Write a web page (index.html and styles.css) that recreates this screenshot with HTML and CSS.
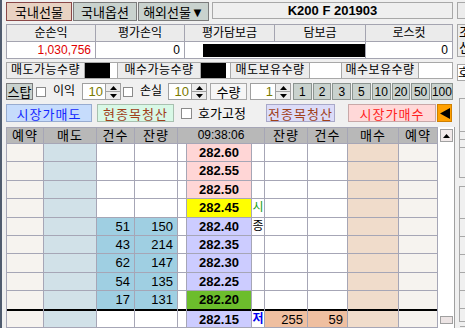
FILE: index.html
```html
<!DOCTYPE html>
<html lang="ko">
<head>
    <meta charset="UTF-8">
    <meta name="viewport" content="width=device-width, initial-scale=1.0">
    <title>선물 주문</title>
    <link rel="stylesheet" href="styles.css">
</head>
<body>
<div class="window">
    <div class="main">
        <div class="tabs">
            <div class="tab active">국내선물</div>
            <div class="tab option">국내옵션</div>
            <div class="tab overseas">해외선물▼</div>
            <div class="title">K200 F 201903</div>
        </div>

        <div class="summary">
            <div class="head">순손익</div>
            <div class="head">평가손익</div>
            <div class="head">평가담보금</div>
            <div class="head">담보금</div>
            <div class="head">로스컷</div>
            <div class="val profit">1,030,756</div>
            <div class="val">0</div>
            <div class="val hidden"><span class="mask"></span></div>
            <div class="val">0</div>
        </div>

        <div class="qty">
            <div class="qty-label">매도가능수량</div>
            <div class="qty-val"><span class="mask"></span></div>
            <div class="qty-label">매수가능수량</div>
            <div class="qty-val"><span class="mask"></span></div>
            <div class="qty-label">매도보유수량</div>
            <div class="qty-val"></div>
            <div class="qty-label">매수보유수량</div>
            <div class="qty-val"></div>
        </div>

        <div class="stop-row">
            <div class="stop-btn">스탑</div>
            <span class="check first"></span>
            <span class="txt profit-txt">이익</span>
            <div class="spin">
                <span class="spin-num">10</span>
                <span class="spin-arrows">
                    <i><svg width="7" height="4" viewBox="0 0 7 4"><path d="M3.5 0L7 4H0z"/></svg></i>
                    <i><svg width="7" height="4" viewBox="0 0 7 4"><path d="M0 0H7L3.5 4z"/></svg></i>
                </span>
            </div>
            <span class="check"></span>
            <span class="txt loss-txt">손실</span>
            <div class="spin">
                <span class="spin-num">10</span>
                <span class="spin-arrows">
                    <i><svg width="7" height="4" viewBox="0 0 7 4"><path d="M3.5 0L7 4H0z"/></svg></i>
                    <i><svg width="7" height="4" viewBox="0 0 7 4"><path d="M0 0H7L3.5 4z"/></svg></i>
                </span>
            </div>
            <div class="qty-box">수량</div>
            <div class="spin wide">
                <span class="spin-num">1</span>
                <span class="spin-arrows">
                    <i><svg width="7" height="4" viewBox="0 0 7 4"><path d="M3.5 0L7 4H0z"/></svg></i>
                    <i><svg width="7" height="4" viewBox="0 0 7 4"><path d="M0 0H7L3.5 4z"/></svg></i>
                </span>
            </div>
            <div class="presets">
                <div class="preset">1</div>
                <div class="preset">2</div>
                <div class="preset">3</div>
                <div class="preset">5</div>
                <div class="preset">10</div>
                <div class="preset">20</div>
                <div class="preset">50</div>
                <div class="preset">100</div>
            </div>
        </div>

        <div class="order-row">
            <div class="obtn sell">시장가매도</div>
            <div class="obtn clear-one">현종목청산</div>
            <span class="check fix"></span>
            <span class="txt fix-txt">호가고정</span>
            <div class="obtn clear-all">전종목청산</div>
            <div class="obtn buy">시장가매수</div>
            <div class="obtn collapse">
                <svg width="10" height="11" viewBox="0 0 10 11"><path d="M0 5.5L10 0V11z"/></svg>
            </div>
        </div>

        <div class="book-area">
            <div class="book">
                <div class="th">예약</div>
                <div class="th">매도</div>
                <div class="th">건수</div>
                <div class="th">잔량</div>
                <div class="th time">09:38:06</div>
                <div class="th">잔량</div>
                <div class="th">건수</div>
                <div class="th">매수</div>
                <div class="th">예약</div>

                <div class="res"></div><div class="ask"></div><div class="num"></div><div class="num"></div><div class="gap"></div>
                <div class="price up">282.60</div><div class="mark"></div>
                <div class="num"></div><div class="num"></div><div class="bid"></div><div class="res"></div>

                <div class="res"></div><div class="ask"></div><div class="num"></div><div class="num"></div><div class="gap"></div>
                <div class="price up">282.55</div><div class="mark"></div>
                <div class="num"></div><div class="num"></div><div class="bid"></div><div class="res"></div>

                <div class="res"></div><div class="ask"></div><div class="num"></div><div class="num"></div><div class="gap"></div>
                <div class="price up">282.50</div><div class="mark"></div>
                <div class="num"></div><div class="num"></div><div class="bid"></div><div class="res"></div>

                <div class="res"></div><div class="ask"></div><div class="num"></div><div class="num"></div><div class="gap"></div>
                <div class="price open">282.45</div><div class="mark green">시</div>
                <div class="num"></div><div class="num"></div><div class="bid"></div><div class="res"></div>

                <div class="res"></div><div class="ask"></div><div class="num sold">51</div><div class="num sold">150</div><div class="gap"></div>
                <div class="price down">282.40</div><div class="mark">종</div>
                <div class="num"></div><div class="num"></div><div class="bid"></div><div class="res"></div>

                <div class="res"></div><div class="ask"></div><div class="num sold">43</div><div class="num sold">214</div><div class="gap"></div>
                <div class="price down">282.35</div><div class="mark"></div>
                <div class="num"></div><div class="num"></div><div class="bid"></div><div class="res"></div>

                <div class="res"></div><div class="ask"></div><div class="num sold">62</div><div class="num sold">147</div><div class="gap"></div>
                <div class="price down">282.30</div><div class="mark"></div>
                <div class="num"></div><div class="num"></div><div class="bid"></div><div class="res"></div>

                <div class="res"></div><div class="ask"></div><div class="num sold">54</div><div class="num sold">135</div><div class="gap"></div>
                <div class="price down">282.25</div><div class="mark"></div>
                <div class="num"></div><div class="num"></div><div class="bid"></div><div class="res"></div>

                <div class="res"></div><div class="ask"></div><div class="num sold">17</div><div class="num sold">131</div><div class="gap"></div>
                <div class="price low">282.20</div><div class="mark"></div>
                <div class="num"></div><div class="num"></div><div class="bid"></div><div class="res"></div>

                <div class="res last"></div><div class="ask last"></div><div class="num last"></div><div class="num last"></div><div class="gap last"></div>
                <div class="price down last">282.15</div><div class="mark blue last">저</div>
                <div class="num bought last">255</div><div class="num bought last">59</div><div class="bid last"></div><div class="res last"></div>
            </div>
            <div class="scroll">
                <div class="scroll-up">
                    <svg width="7" height="4" viewBox="0 0 7 4"><path d="M3.5 0L7 4H0z"/></svg>
                </div>
                <div class="scroll-end"></div>
            </div>
        </div>
    </div>

    <div class="side">
        <div class="side-box top"></div>
        <div class="side-box stack">조<br>신</div>
        <div class="side-box field">호</div>
        <div class="side-box list short">
            <div class="line"></div><div class="line"></div><div class="line"></div>
        </div>
        <div class="side-box list long">
            <div class="line"></div><div class="line"></div><div class="line"></div>
            <div class="line"></div><div class="line"></div><div class="line"></div>
            <div class="line"></div>
        </div>
    </div>
</div>
</body>
</html>
```

FILE: styles.css
```css
body {
    margin: 0;
    background: #f0f0f0;
    font-family: "Liberation Sans", "Noto Sans CJK KR", sans-serif;
    font-size: 12px;
    color: #000;
    overflow: hidden;
}

.window {
    display: flex;
    height: 328px;
    border-left: 2px solid #4f5b6e;
    padding-left: 4px;
    box-sizing: border-box;
}

.main {
    width: 449px;
    flex: none;
    display: flex;
    flex-direction: column;
}

/* top tabs */
.tabs {
    display: flex;
    margin-top: 2px;
    height: 19px;
}

.tab {
    box-sizing: border-box;
    width: 66px;
    height: 19px;
    margin-right: 1px;
    border: 1px solid #7c7c7c;
    background: #c9d2ce;
    font-size: 13px;
    display: flex;
    align-items: center;
    justify-content: center;
}

.tab.active {
    background: #e8d2c2;
    border-color: #8a4848;
}

.tab.option { width: 64px; }
.tab.overseas { width: 71px; }

.title {
    box-sizing: border-box;
    width: 241px;
    height: 17px;
    margin-left: 2px;
    border: 1px solid #a8a8a8;
    background: #efefef;
    font-weight: bold;
    font-size: 13px;
    display: flex;
    align-items: center;
    justify-content: center;
}

/* account summary */
.summary {
    display: grid;
    grid-template-columns: 88px 88px 89px 90px 86px;
    grid-template-rows: 16px 16px;
    gap: 1px;
    width: 447px;
    box-sizing: border-box;
    margin-top: 3px;
    border: 1px solid #a4a4b0;
    background: #a4a4b0;
}

.summary .head {
    background: #ebebeb;
    text-align: center;
    line-height: 16px;
}

.summary .val {
    background: #fff;
    text-align: right;
    padding-right: 4px;
    line-height: 16px;
}

.summary .profit { color: #e00000; }

.summary .hidden {
    grid-column: span 2;
    padding-right: 0;
    display: flex;
    justify-content: flex-end;
    align-items: center;
}

.summary .hidden .mask {
    width: 162px;
    height: 13px;
    margin-top: 1px;
    background: #000;
}

/* available quantity row */
.qty {
    display: grid;
    grid-template-columns: 77px 32px 82px 29px 78px 31px 76px 33px;
    grid-template-rows: 15px;
    gap: 1px;
    width: 447px;
    box-sizing: border-box;
    margin-top: 3px;
    border: 1px solid #a8a8a8;
    background: #a8a8a8;
}

.qty-label {
    background: #ececec;
    text-align: center;
    line-height: 15px;
    letter-spacing: 0.5px;
}

.qty-val {
    background: #fff;
}

.qty-val .mask {
    display: block;
    width: 25px;
    height: 15px;
    background: #000;
}

/* stop / spinner row */
.stop-row {
    display: flex;
    align-items: center;
    width: 447px;
    height: 17px;
    margin-top: 4px;
}

.stop-btn {
    box-sizing: border-box;
    width: 27px;
    height: 17px;
    border: 1px solid #7c7c7c;
    background: #c9d2ce;
    font-size: 13px;
    display: flex;
    align-items: center;
    justify-content: center;
}

.check {
    flex: none;
    box-sizing: border-box;
    width: 10px;
    height: 10px;
    margin-left: 2px;
    border: 1px solid #8a8a8a;
    background: #fff;
}

.check.first { margin-left: 3px; }

.txt {
    flex: none;
    white-space: nowrap;
    font-size: 12px;
    line-height: 17px;
}

.profit-txt {
    width: 24px;
    margin-left: 7px;
}

.loss-txt {
    width: 24px;
    margin-left: 7px;
}

.spin {
    flex: none;
    box-sizing: border-box;
    display: flex;
    width: 39px;
    height: 17px;
    margin-left: 4px;
    border: 1px solid #a0a0a0;
    background: #fff;
}

.profit-txt + .spin { margin-left: 5px; }
.spin + .check { margin-left: 2px; }

.spin.wide {
    width: 41px;
    margin-left: 3px;
}

.spin-num {
    flex: 1;
    text-align: right;
    padding-right: 2px;
    color: #7a7a00;
    font-size: 13px;
    line-height: 15px;
}

.spin-arrows {
    width: 14px;
    display: flex;
    flex-direction: column;
    border-left: 1px solid #a0a0a0;
}

.spin-arrows i {
    flex: 1;
    background: #ececec;
    display: flex;
    align-items: center;
    justify-content: center;
}

.spin-arrows i + i { border-top: 1px solid #a0a0a0; }

.qty-box {
    flex: none;
    box-sizing: border-box;
    width: 37px;
    height: 17px;
    margin-left: 3px;
    border: 1px solid #a8a8a8;
    background: #f6f6f6;
    font-size: 13px;
    display: flex;
    align-items: center;
    justify-content: center;
}

.presets {
    flex: 1;
    display: flex;
    gap: 1px;
    margin-left: 2px;
    height: 17px;
}

.preset {
    flex: 1;
    box-sizing: border-box;
    border: 1px solid #8c9490;
    background: #c9d2ce;
    font-size: 12px;
    display: flex;
    align-items: center;
    justify-content: center;
}

/* order buttons */
.order-row {
    display: flex;
    align-items: center;
    width: 447px;
    height: 18px;
    margin-top: 4px;
}

.obtn {
    flex: none;
    box-sizing: border-box;
    height: 18px;
    border: 1px solid #a0a0b0;
    font-size: 13px;
    letter-spacing: 1px;
    display: flex;
    align-items: center;
    justify-content: center;
}

.obtn.sell {
    width: 86px;
    background: #c6dcfc;
    border-color: #98acd0;
    color: #1428ff;
}

.obtn.clear-one {
    width: 77px;
    margin-left: 5px;
    background: #d8f8e6;
    border-color: #a8c0b0;
    color: #a0401a;
}

.check.fix {
    width: 11px;
    height: 11px;
    margin-left: 7px;
}

.fix-txt {
    width: 52px;
    margin-left: 6px;
    font-size: 13px;
}

.obtn.clear-all {
    width: 69px;
    margin-left: 16px;
    background: #dcdcf8;
    border-color: #a8a8c8;
    color: #a0401a;
}

.obtn.buy {
    width: 88px;
    margin-left: 13px;
    background: #ffd8d8;
    border-color: #c8a8a8;
    color: #ff2020;
}

.obtn.collapse {
    width: 15px;
    margin-left: 1px;
    background: #ffa000;
    border-color: #d08000;
}

/* order book */
.book-area {
    display: flex;
    margin-top: 5px;
    height: 201px;
}

.book {
    display: grid;
    grid-template-columns: 36px 52px 37px 42px 8px 64px 12px 42px 39px 50px 38px;
    grid-template-rows: 15px repeat(10, 17.4px);
    gap: 1px;
    width: 432px;
    box-sizing: border-box;
    border: 1px solid #a6a6b6;
    border-bottom: none;
    background: #a6a6b6;
    align-content: start;
}

.th {
    background: #b8b8b8;
    text-align: center;
    font-size: 13px;
    line-height: 15px;
    letter-spacing: 1px;
}

.th.time {
    grid-column: span 3;
    font-size: 12px;
    letter-spacing: 0;
}

.res { background: #f6f3ef; }
.ask { background: #d1e1e8; }
.bid { background: #f0dccb; }
.gap { background: #fff; }

.num {
    background: #fff;
    text-align: right;
    padding-right: 4px;
    font-size: 13px;
    line-height: 17px;
}

.num.sold { background: #9fcfe2; }
.num.bought { background: #efbfa0; }

.price {
    text-align: center;
    font-weight: bold;
    font-size: 13px;
    line-height: 17px;
}

.price.up { background: #ffd6d6; }
.price.open { background: #ffff00; }
.price.down { background: #ccccff; }
.price.low { background: #6cbd2c; }

.mark {
    background: #fff;
    text-align: center;
    font-size: 12px;
    line-height: 17px;
}

.mark.green { color: #10a010; }
.mark.blue { color: #0000f0; font-weight: bold; }

.last {
    margin-top: -1px;
    border-top: 2px solid #000;
}

.scroll {
    width: 17px;
    box-sizing: border-box;
    border-right: 1px solid #a0a0a0;
    background: #fff;
    display: flex;
    flex-direction: column;
    align-items: center;
}

.scroll-up {
    box-sizing: border-box;
    width: 13px;
    height: 13px;
    margin-top: 2px;
    border: 1px solid #a0a0a0;
    background: #f2eaea;
    display: flex;
    align-items: center;
    justify-content: center;
}

.scroll-end {
    box-sizing: border-box;
    width: 13px;
    height: 8px;
    margin-top: auto;
    margin-bottom: 4px;
    border: 1px solid #a0a0a0;
    background: #ece4e4;
}

/* cut-off neighbour panel */
.side {
    flex: none;
    width: 60px;
    margin-left: 2px;
    display: flex;
    flex-direction: column;
}

.side-box {
    box-sizing: border-box;
    border: 1px solid #a8a8a8;
    background: #ececec;
}

.side-box.top {
    height: 17px;
    margin-top: 2px;
}

.side-box.stack {
    height: 33px;
    margin-top: 5px;
    padding-left: 1px;
    font-size: 13px;
    line-height: 15px;
}

.side-box.field {
    height: 17px;
    margin-top: 7px;
    background: #fff;
    font-size: 13px;
    line-height: 15px;
}

.side-box.list {
    margin-left: 2px;
    background: #f0f0f0;
}

.side-box.short {
    height: 80px;
    margin-top: 17px;
    padding-top: 25px;
}

.side-box.long {
    height: 136px;
    margin-top: 8px;
    padding-top: 14px;
}

.side-box .line {
    height: 17px;
    border-bottom: 1px solid #a8a8a8;
}

.side-box.short .line { height: 7px; }
```
